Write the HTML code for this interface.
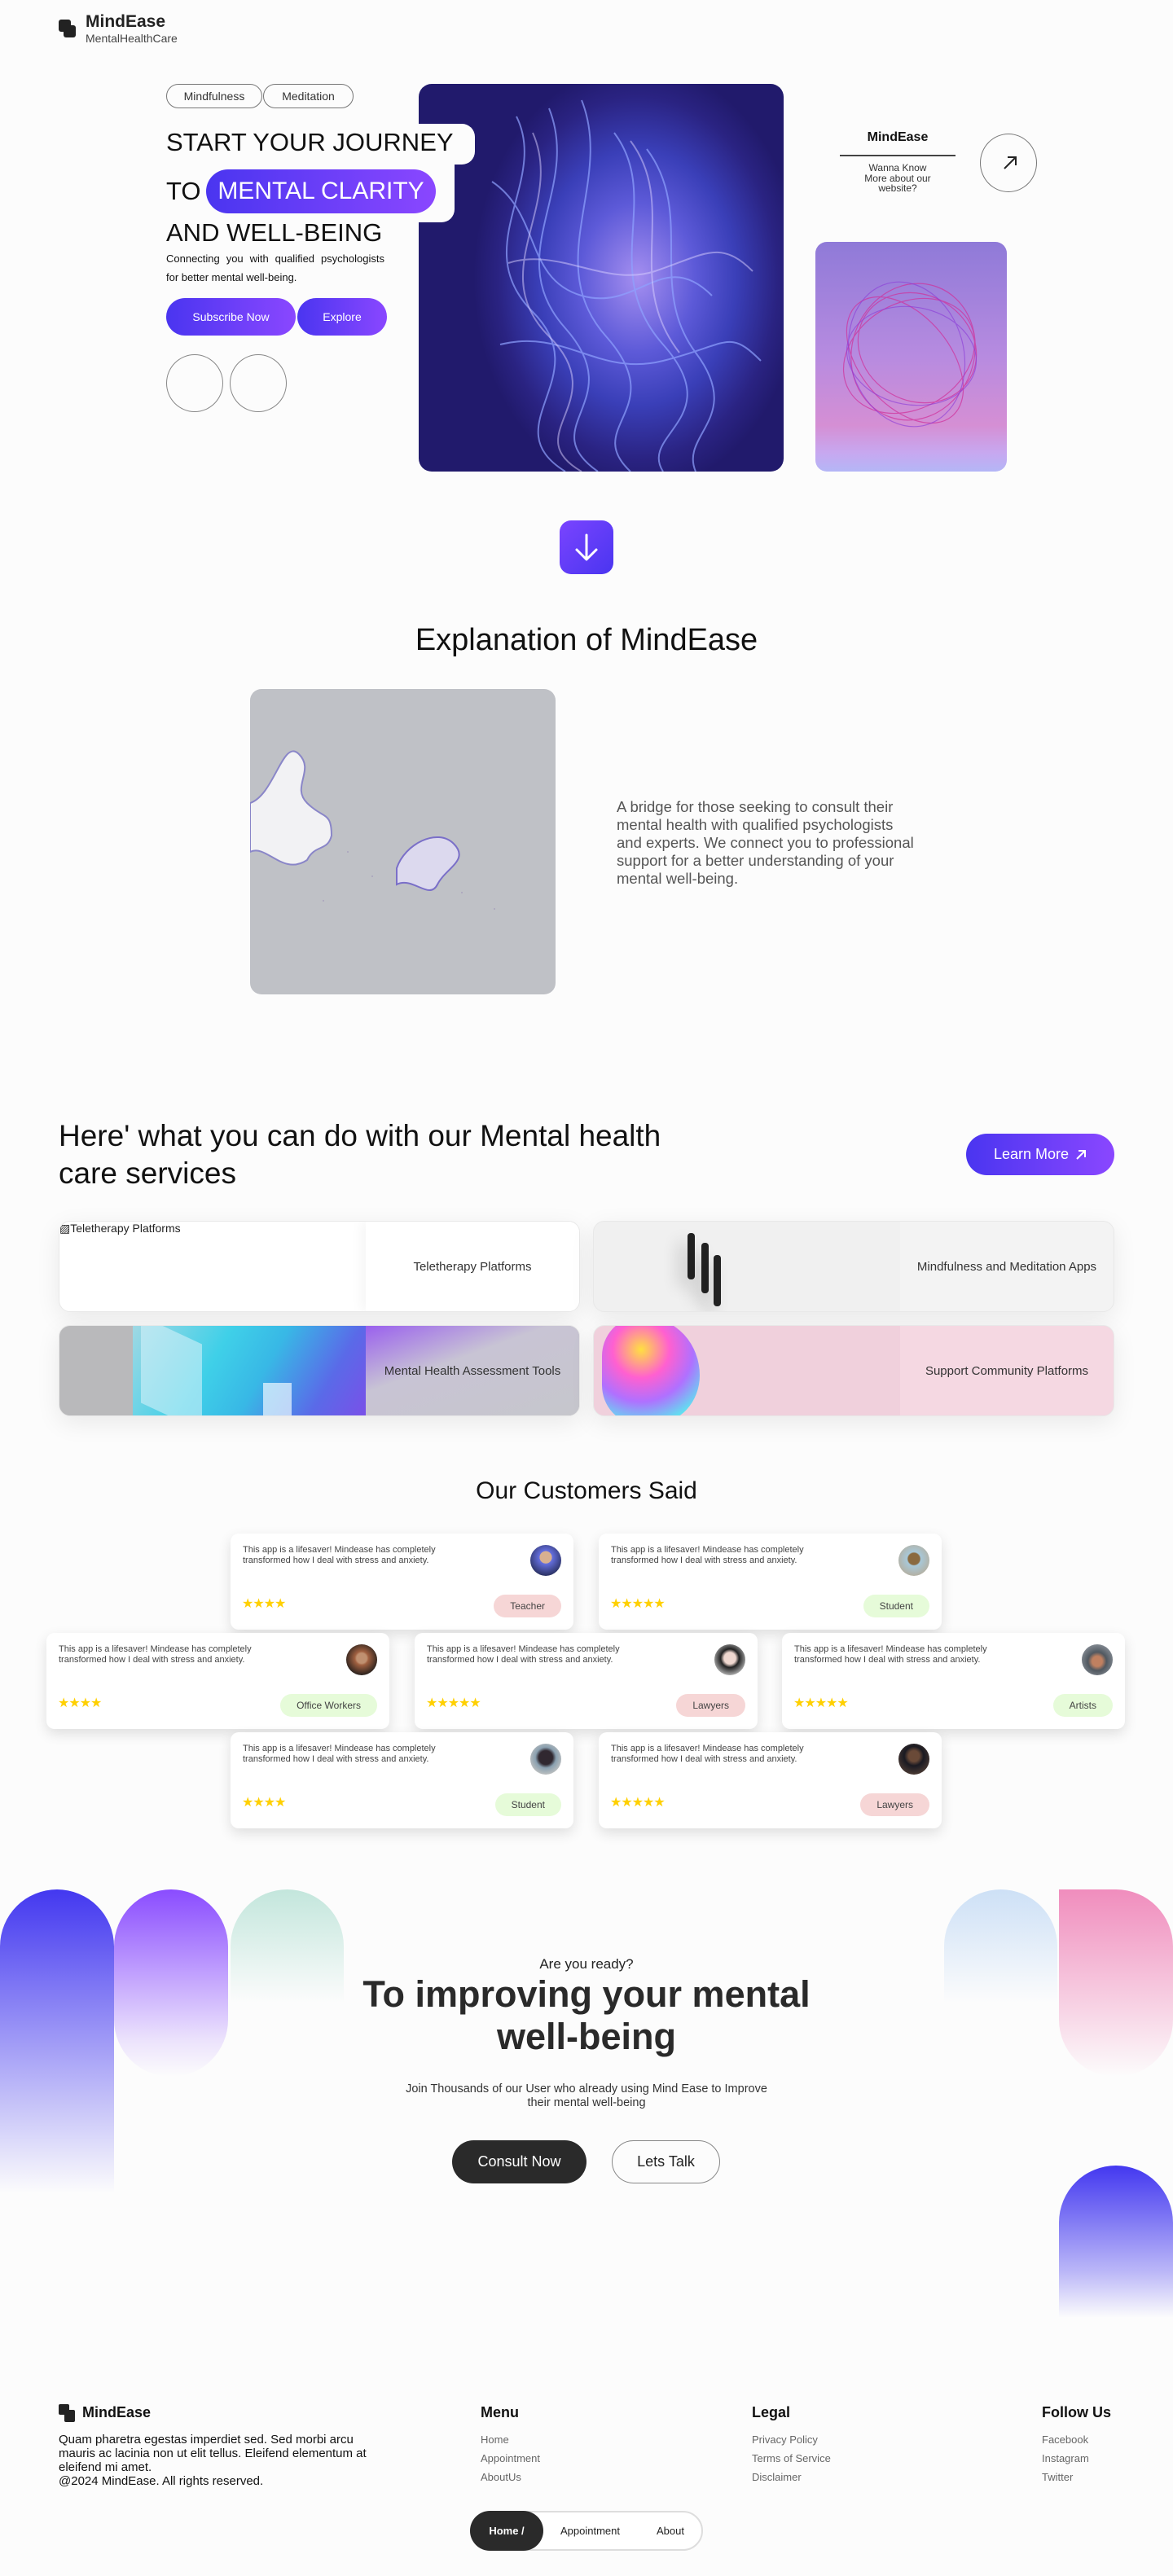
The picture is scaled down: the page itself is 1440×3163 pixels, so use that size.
<!DOCTYPE html>
<html><head><meta charset="utf-8">
<style>
*{margin:0;padding:0;box-sizing:border-box}
body{width:1440px;height:3163px;position:relative;background:#fcfcfc;font-family:"Liberation Sans",Arial,sans-serif;color:#111;overflow:hidden}
.a{position:absolute}
.grad{background:linear-gradient(90deg,#4a35f0,#8a47ff)}
.pill{border:1px solid #777;border-radius:16px;font-size:14px;color:#333;display:flex;align-items:center;justify-content:center}
.card{position:absolute;width:640px;height:112px;border-radius:14px;overflow:hidden;box-shadow:0 8px 30px rgba(0,0,0,.08);border:1px solid #e8e8e8}
.card .rp{position:absolute;left:376px;top:0;right:0;bottom:0;display:flex;align-items:center;justify-content:center;font-size:15px;color:#333}
.t{position:absolute;width:421px;height:118px;background:#fff;border-radius:10px;box-shadow:0 6px 16px rgba(0,0,0,.12)}
.t p{position:absolute;left:15px;top:14px;font-size:11px;line-height:12.5px;color:#444;width:250px}
.t .av{position:absolute;right:15px;top:14px;width:38px;height:38px;border-radius:50%}
.t .st{position:absolute;left:14px;top:76px;font-size:16px;color:#ffd000;letter-spacing:-1px}
.t .bd{position:absolute;right:15px;top:75px;height:28px;padding:0 20px;border-radius:14px;font-size:12px;color:#444;display:flex;align-items:center}
.pk{background:#f6d6d6}.gn{background:#e6fbd9}
.arch{position:absolute;border-radius:70px 70px 0 0}
.fh{font-size:18px;font-weight:bold}
.fl{font-size:13px;color:#666;line-height:23px}
</style></head><body>

<div class="a" style="left:72px;top:24px;width:15px;height:15px;background:#222;border-radius:3px"></div>
<div class="a" style="left:78px;top:31px;width:15px;height:15px;background:#222;border-radius:3px"></div>
<div class="a" style="left:105px;top:15px;font-size:21px;font-weight:bold;color:#222">MindEase</div>
<div class="a" style="left:105px;top:39px;font-size:14px;color:#444">MentalHealthCare</div>

<div class="a pill" style="left:204px;top:103px;width:118px;height:30px">Mindfulness</div>
<div class="a pill" style="left:323px;top:103px;width:111px;height:30px">Meditation</div>

<div class="a" style="left:514px;top:103px;width:448px;height:476px;border-radius:16px;overflow:hidden;background:radial-gradient(ellipse 45% 55% at 60% 50%,#a58ff0 0%,#5d5ad8 35%,#3a3fb8 60%,#2a2382 85%,#211a6c 100%)">
<svg width="448" height="476" style="position:absolute;left:0;top:0" fill="none" stroke-width="2">
<g stroke="#8fa2ff" opacity=".7">
<path d="M120 40 C160 120 60 200 140 280 S 90 420 180 476"/>
<path d="M160 30 C200 130 100 210 180 300 S 140 420 220 476"/>
<path d="M200 20 C240 120 150 220 230 310 S 200 420 260 476"/>
<path d="M240 60 C300 140 220 230 300 320 S 270 430 300 476"/>
<path d="M280 80 C340 160 280 250 340 330 S 320 430 340 476"/>
<path d="M90 120 C150 160 130 240 200 260 S 300 200 360 260"/>
<path d="M100 320 C180 300 220 360 300 340 S 380 300 420 340"/>
</g>
<g stroke="#d9d0ff" opacity=".5">
<path d="M140 60 C180 150 80 230 160 310 S 120 430 200 476"/>
<path d="M260 70 C320 150 250 240 320 330"/>
<path d="M110 220 C170 200 230 250 290 230 S 370 190 410 230"/>
</g>
</svg>
</div>
<div class="a" style="left:500px;top:152px;width:83px;height:50px;background:#fcfcfc;border-radius:0 16px 16px 0"></div>
<div class="a" style="left:500px;top:195px;width:58px;height:78px;background:#fcfcfc;border-radius:0 0 16px 0"></div>

<div class="a" style="left:204px;top:157px;font-size:31px;line-height:36px;white-space:nowrap">START YOUR JOURNEY</div>
<div class="a" style="left:204px;top:217px;font-size:31px;line-height:36px">TO</div>
<div class="a grad" style="left:253px;top:208px;width:282px;height:54px;border-radius:27px;color:#fff;font-size:30px;display:flex;align-items:center;justify-content:center">MENTAL CLARITY</div>
<div class="a" style="left:204px;top:268px;font-size:31px;line-height:36px;white-space:nowrap">AND WELL-BEING</div>
<div class="a" style="left:204px;top:306px;font-size:13px;line-height:23px;width:268px;text-align:justify;text-align-last:left">Connecting you with qualified psychologists for better mental well-being.</div>
<div class="a grad" style="left:204px;top:366px;width:159px;height:46px;border-radius:23px;color:#fff;font-size:14px;display:flex;align-items:center;justify-content:center">Subscribe Now</div>
<div class="a grad" style="left:365px;top:366px;width:110px;height:46px;border-radius:23px;color:#fff;font-size:14px;display:flex;align-items:center;justify-content:center">Explore</div>
<div class="a" style="left:204px;top:435px;width:70px;height:71px;border:1px solid #888;border-radius:50%"></div>
<div class="a" style="left:282px;top:435px;width:70px;height:71px;border:1px solid #888;border-radius:50%"></div>

<div class="a" style="left:1031px;top:160px;width:142px;text-align:center;font-size:16px;font-weight:bold;color:#111">MindEase</div>
<div class="a" style="left:1031px;top:190px;width:142px;height:2px;background:#444"></div>
<div class="a" style="left:1031px;top:200px;width:142px;text-align:center;font-size:12px;line-height:12.5px;color:#333">Wanna Know<br>More about our<br>website?</div>
<div class="a" style="left:1203px;top:164px;width:70px;height:72px;border:1.5px solid #777;border-radius:50%">
<svg width="70" height="72" style="position:absolute;left:-1px;top:-1px"><path d="M30 43 L44 29 M34 29 H44 V39" stroke="#222" stroke-width="2" fill="none"/></svg></div>

<div class="a" style="left:1001px;top:297px;width:235px;height:282px;border-radius:14px;overflow:hidden;background:linear-gradient(180deg,#8f7ad8 0%,#b78be0 50%,#d58fd4 80%,#c7a8f0 92%,#b4b6f6 100%)">
<svg width="235" height="282" fill="none" stroke-width="1.2">
<g stroke="#d0309a" opacity=".7">
<ellipse cx="115" cy="140" rx="85" ry="65" transform="rotate(-30 115 140)"/>
<ellipse cx="120" cy="135" rx="75" ry="85" transform="rotate(20 120 135)"/>
<ellipse cx="110" cy="145" rx="90" ry="55" transform="rotate(50 110 145)"/>
<ellipse cx="125" cy="130" rx="65" ry="75" transform="rotate(-60 125 130)"/>
</g>
<g stroke="#8a3ad8" opacity=".6">
<ellipse cx="118" cy="140" rx="80" ry="60" transform="rotate(10 118 140)"/>
<ellipse cx="112" cy="138" rx="70" ry="90" transform="rotate(-15 112 138)"/>
</g>
</svg></div>

<div class="a" style="left:687px;top:639px;width:66px;height:66px;border-radius:14px;background:linear-gradient(135deg,#7a44ff,#4a35f0)">
<svg width="66" height="66"><path d="M33 18 V47 M21 36 L33 48 L45 36" stroke="#fff" stroke-width="3" fill="none" stroke-linecap="round" stroke-linejoin="round"/></svg></div>

<div class="a" style="left:0;width:1440px;top:765px;text-align:center;font-size:38px;color:#111">Explanation of MindEase</div>
<div class="a" style="left:307px;top:846px;width:375px;height:375px;border-radius:14px;background:#bfc1c6;overflow:hidden">
<svg width="375" height="375">
<path d="M0 140 C30 130 40 60 60 80 C80 100 50 120 70 140 C90 160 100 150 100 180 C95 200 80 190 70 210 C40 230 20 190 0 200Z" fill="#f2f2f4" stroke="#8a86c8" stroke-width="2"/>
<path d="M180 220 C190 190 230 170 250 190 C270 210 240 220 230 240 C220 260 200 230 180 240Z" fill="#dcd9ee" stroke="#7a6fc8" stroke-width="2"/>
<g fill="#9a8fb8" opacity=".6"><circle cx="120" cy="200" r="1"/><circle cx="150" cy="230" r="1"/><circle cx="260" cy="250" r="1"/><circle cx="300" cy="270" r="1"/><circle cx="90" cy="260" r="1"/></g>
</svg></div>
<div class="a" style="left:757px;top:980px;width:375px;font-size:18.5px;line-height:22px;color:#555">A bridge for those seeking to consult their mental health with qualified psychologists and experts. We connect you to professional support for a better understanding of your mental well-being.</div>

<div class="a" style="left:72px;top:1372px;font-size:37px;line-height:46px;width:780px;color:#111">Here' what you can do with our Mental health care services</div>
<div class="a grad" style="left:1186px;top:1392px;width:182px;height:51px;border-radius:26px;color:#fff;font-size:18px;display:flex;align-items:center;justify-content:center;gap:8px">Learn More <svg width="14" height="14"><path d="M2 12 L12 2 M4 2 H12 V10" stroke="#fff" stroke-width="2" fill="none"/></svg></div>

<div class="card" style="left:72px;top:1499px;background:#fff">
<div class="a" style="left:0;top:0;font-size:14px;color:#222">▨Teletherapy Platforms</div>
<div class="rp" style="background:#fff;box-shadow:-6px 0 14px rgba(0,0,0,.04)">Teletherapy Platforms</div></div>
<div class="card" style="left:728px;top:1499px;background:#f0f0f0">
<div class="a" style="left:115px;top:14px;width:9px;height:57px;background:#222;border-radius:4px;box-shadow:-10px 10px 20px rgba(0,0,0,.2)"></div>
<div class="a" style="left:132px;top:26px;width:9px;height:62px;background:#222;border-radius:4px;box-shadow:-10px 10px 20px rgba(0,0,0,.2)"></div>
<div class="a" style="left:147px;top:41px;width:9px;height:63px;background:#222;border-radius:4px;box-shadow:-10px 10px 20px rgba(0,0,0,.2)"></div>
<div class="rp" style="background:#f3f3f3">Mindfulness and Meditation Apps</div></div>
<div class="card" style="left:72px;top:1627px;background:#b9b9bb">
<div class="a" style="left:90px;top:0;width:286px;height:112px;background:linear-gradient(120deg,#9fd8e4 0%,#3fd0e8 35%,#38b8e6 55%,#5a6ae8 80%,#7a50e8 100%)"></div>
<div class="a" style="left:100px;top:5px;width:75px;height:107px;background:rgba(210,240,248,.6);transform:skewY(25deg)"></div>
<div class="a" style="left:250px;top:70px;width:35px;height:42px;background:rgba(240,250,255,.7)"></div>
<div class="rp" style="background:linear-gradient(160deg,#9a60ee 0%,#c8c4d4 40%,#c6c6cc 100%);color:#333">Mental Health Assessment Tools</div></div>
<div class="card" style="left:728px;top:1627px;background:#f0d0dc">
<div class="a" style="left:10px;top:-10px;width:120px;height:130px;border-radius:40% 60% 50% 40%;background:radial-gradient(circle at 40% 30%,#ffe040 0%,#ff60d0 30%,#b070ff 55%,#60e0f0 80%,#f0d0dc 100%)"></div>
<div class="rp" style="background:#f5d8e2">Support Community Platforms</div></div>

<div class="a" style="left:0;width:1440px;top:1814px;text-align:center;font-size:30px;color:#111">Our Customers Said</div>

<div class="t" style="left:283px;top:1883px"><p>This app is a lifesaver! Mindease has completely transformed how I deal with stress and anxiety.</p><div class="av" style="background:radial-gradient(circle at 50% 40%,#d8b090 0 25%,#6670e0 26%,#1a2040 90%)"></div><div class="st">★★★★</div><div class="bd pk">Teacher</div></div>
<div class="t" style="left:735px;top:1883px"><p>This app is a lifesaver! Mindease has completely transformed how I deal with stress and anxiety.</p><div class="av" style="background:radial-gradient(circle at 50% 45%,#8a6a40 0 25%,#a8c8d8 30%,#b8a890 90%)"></div><div class="st">★★★★★</div><div class="bd gn">Student</div></div>
<div class="t" style="left:57px;top:2005px"><p>This app is a lifesaver! Mindease has completely transformed how I deal with stress and anxiety.</p><div class="av" style="background:radial-gradient(circle at 50% 45%,#c09070 0 22%,#a06040 30%,#181818 80%)"></div><div class="st">★★★★</div><div class="bd gn">Office Workers</div></div>
<div class="t" style="left:509px;top:2005px"><p>This app is a lifesaver! Mindease has completely transformed how I deal with stress and anxiety.</p><div class="av" style="background:radial-gradient(circle at 50% 45%,#f0d8d0 0 25%,#222 40%,#eee 90%)"></div><div class="st">★★★★★</div><div class="bd pk">Lawyers</div></div>
<div class="t" style="left:960px;top:2005px"><p>This app is a lifesaver! Mindease has completely transformed how I deal with stress and anxiety.</p><div class="av" style="background:radial-gradient(circle at 50% 55%,#c08060 0 22%,#505860 40%,#9aa0a8 90%)"></div><div class="st">★★★★★</div><div class="bd gn">Artists</div></div>
<div class="t" style="left:283px;top:2127px"><p>This app is a lifesaver! Mindease has completely transformed how I deal with stress and anxiety.</p><div class="av" style="background:radial-gradient(circle at 50% 45%,#302830 0 30%,#8aa0b0 45%,#d8d0c8 90%)"></div><div class="st">★★★★</div><div class="bd gn">Student</div></div>
<div class="t" style="left:735px;top:2127px"><p>This app is a lifesaver! Mindease has completely transformed how I deal with stress and anxiety.</p><div class="av" style="background:radial-gradient(circle at 50% 40%,#6a4a38 0 22%,#1a1a22 40%,#5a4438 90%)"></div><div class="st">★★★★★</div><div class="bd pk">Lawyers</div></div>

<div class="arch" style="left:0;top:2320px;width:140px;height:373px;background:linear-gradient(180deg,#4338f0,rgba(67,56,240,.25) 75%,rgba(67,56,240,0))"></div>
<div class="arch" style="left:140px;top:2320px;width:140px;height:230px;border-radius:70px;background:linear-gradient(180deg,#8a4cff,rgba(138,76,255,.15) 80%,rgba(138,76,255,0))"></div>
<div class="arch" style="left:283px;top:2320px;width:139px;height:140px;background:linear-gradient(180deg,#c3e6dc,rgba(195,230,220,0))"></div>
<div class="arch" style="left:1159px;top:2320px;width:139px;height:140px;background:linear-gradient(180deg,#cde0f6,rgba(205,224,246,0))"></div>
<div class="arch" style="left:1300px;top:2320px;width:140px;height:230px;border-radius:0 70px 70px 70px;background:linear-gradient(180deg,#f08dbd,rgba(240,141,189,.1) 90%,rgba(240,141,189,0))"></div>
<div class="arch" style="left:1300px;top:2659px;width:140px;height:187px;background:linear-gradient(180deg,#4338f0,rgba(67,56,240,.35) 70%,rgba(67,56,240,0))"></div>

<div class="a" style="left:0;width:1440px;top:2402px;text-align:center;font-size:17px;color:#222">Are you ready?</div>
<div class="a" style="left:0;width:1440px;top:2423px;text-align:center;font-size:45px;line-height:52px;font-weight:bold;color:#2a2a2a">To improving your mental<br>well-being</div>
<div class="a" style="left:0;width:1440px;top:2557px;text-align:center;font-size:14.5px;line-height:17px;color:#333">Join Thousands of our User who already using Mind Ease to Improve<br>their mental well-being</div>
<div class="a" style="left:555px;top:2628px;width:165px;height:53px;border-radius:27px;background:#2a2a2a;color:#fff;font-size:18px;display:flex;align-items:center;justify-content:center">Consult Now</div>
<div class="a" style="left:751px;top:2628px;width:133px;height:53px;border-radius:27px;border:1px solid #888;color:#222;font-size:18px;display:flex;align-items:center;justify-content:center">Lets Talk</div>

<div class="a" style="left:72px;top:2952px;width:13px;height:13px;background:#222;border-radius:2px"></div>
<div class="a" style="left:79px;top:2959px;width:13px;height:15px;background:#222;border-radius:2px"></div>
<div class="a fh" style="left:101px;top:2952px">MindEase</div>
<div class="a" style="left:72px;top:2987px;width:390px;font-size:15px;line-height:17px;color:#111">Quam pharetra egestas imperdiet sed. Sed morbi arcu mauris ac lacinia non ut elit tellus. Eleifend elementum at eleifend mi amet.<br>@2024 MindEase. All rights reserved.</div>
<div class="a fh" style="left:590px;top:2952px">Menu</div>
<div class="a fl" style="left:590px;top:2984px">Home<br>Appointment<br>AboutUs</div>
<div class="a fh" style="left:923px;top:2952px">Legal</div>
<div class="a fl" style="left:923px;top:2984px">Privacy Policy<br>Terms of Service<br>Disclaimer</div>
<div class="a fh" style="left:1279px;top:2952px">Follow Us</div>
<div class="a fl" style="left:1279px;top:2984px">Facebook<br>Instagram<br>Twitter</div>

<div class="a" style="left:577px;top:3083px;width:286px;height:49px;border-radius:25px;border:2px solid #ddd;background:#fff"></div>
<div class="a" style="left:577px;top:3083px;width:90px;height:49px;border-radius:25px;background:#2a2a2a;color:#fff;font-size:13px;font-weight:bold;display:flex;align-items:center;justify-content:center">Home /</div>
<div class="a" style="left:688px;top:3100px;font-size:13px;color:#222">Appointment</div>
<div class="a" style="left:806px;top:3100px;font-size:13px;color:#222">About</div>
</body></html>
